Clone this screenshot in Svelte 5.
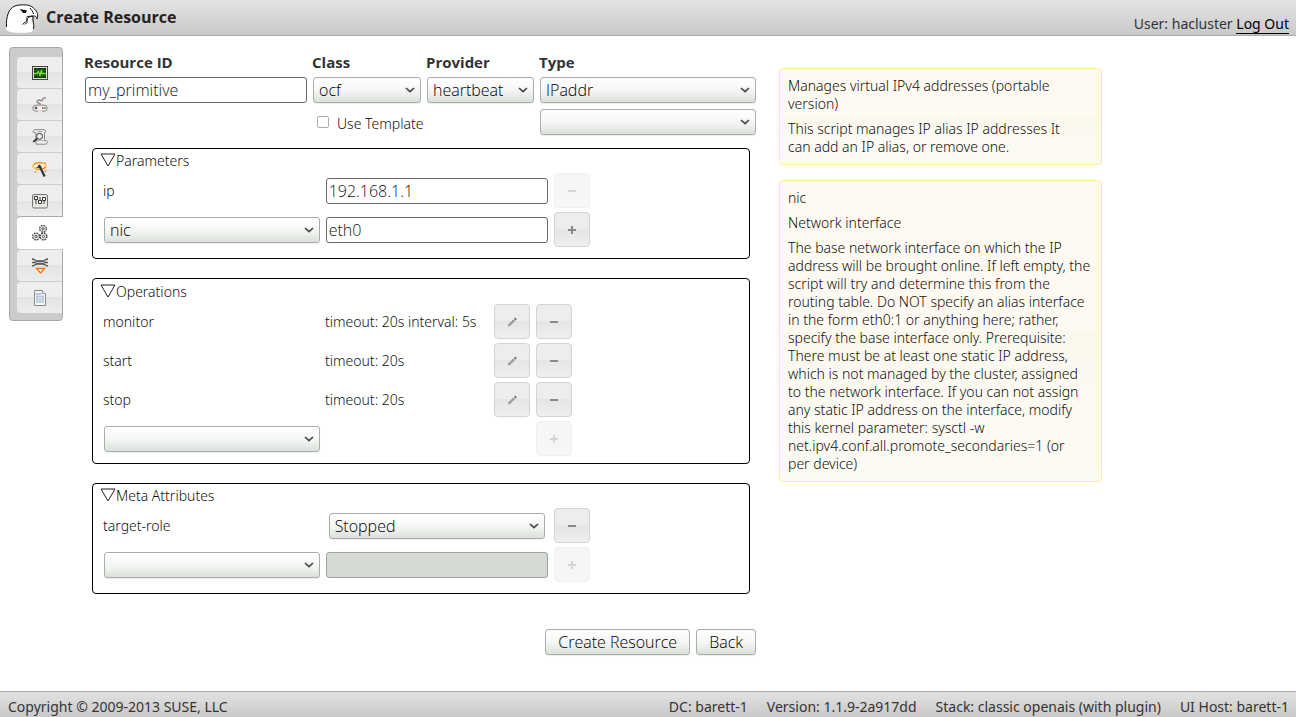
<script>
  let resourceId = $state('my_primitive');
  let useTemplate = $state(false);
  let ip = $state('192.168.1.1');
  let nic = $state('eth0');

  const tabs = ['status', 'simulator', 'history', 'wizard', 'settings', 'resources', 'constraints', 'report'];
  const names = {
    status: 'Cluster Status',
    simulator: 'Simulator',
    history: 'History Explorer',
    wizard: 'Setup Wizard',
    settings: 'Cluster Properties',
    resources: 'Resources',
    constraints: 'Constraints',
    report: 'Report'
  };
  const operations = [
    { name: 'monitor', detail: 'timeout: 20s interval: 5s' },
    { name: 'start', detail: 'timeout: 20s' },
    { name: 'stop', detail: 'timeout: 20s' }
  ];
</script>

{#snippet dropdown(id, value, label)}
  <span class="dropdown">
    <select {id} aria-label={label}><option>{value}</option></select>
    <svg width="10" height="6" viewBox="0 0 10 6" aria-hidden="true"><path d="M1 1 5 4.7 9 1" fill="none" stroke="#444" stroke-width="1.7" /></svg>
  </span>
{/snippet}

{#snippet tool(kind, label, disabled)}
  <button class="tool" type="button" aria-label={label} {disabled}>
    <svg width="12" height="12" viewBox="0 0 12 12" aria-hidden="true">
      {#if kind === 'edit'}
        <path d="M2 10.5 2.6 8.2 7.4 3.4 9 5 4.2 9.8Z" fill="#888" />
        <path d="M3.5 9 8 4.5" stroke="#ccc" stroke-width=".7" />
        <path d="M8 2.8 9.2 1.6 10.8 3.2 9.6 4.4Z" fill="#666" />
      {:else}
        <path d="M2 5h8v2H2z" fill="#888" />
        {#if kind === 'add'}<path d="M5 2h2v8H5z" fill="#888" />{/if}
      {/if}
    </svg>
  </button>
{/snippet}

{#snippet heading(text)}
  <h2>
    <svg width="16" height="14" viewBox="0 0 16 14" aria-hidden="true"><path d="M1 1h14L8 13Z" fill="none" stroke="#222" /></svg>{text}
  </h2>
{/snippet}

{#snippet tabIcon(name)}
  <svg width="16" height="16" viewBox="0 0 16 16" aria-hidden="true">
    {#if name === 'status'}
      <rect x=".5" y="1.5" width="15" height="13" fill="#ddd" stroke="#444" />
      <rect x="2" y="3" width="12" height="10" fill="#123d08" />
      <path d="M5.5 3v10M10.5 3v10M2 5.5h12M2 10.5h12" stroke="#2b6a16" stroke-width=".8" />
      <path d="M2 8.5h3l1.500-2L8 10.500 9.500 5v3.500H14" fill="none" stroke="#7be52e" stroke-width="1.300" />
    {:else if name === 'simulator'}
      <path d="M8 8C9 5 3.500 7 5.500 4S9 5 10 3.500 10 .500 14 1" fill="none" stroke="#777" stroke-width="1.200" />
      <rect x=".8" y="8.200" width="14.400" height="6" rx="3" fill="#f4f4f0" stroke="#888" />
      <path d="M6 14.500h4" stroke="#eee" />
      <path d="M2.500 11h3M4 9.500v3" stroke="#333" />
      <circle cx="10.800" cy="11" r=".9" fill="#b55" /><circle cx="13" cy="11" r=".9" fill="#585" />
    {:else if name === 'history'}
      <path d="M3 .7h9.500c1.500 0 1.500 3 0 3v8h1.800c1.500 0 1 3.500-.8 3.500H4V3.700H2C.5 3.700.7.7 3 .7Z" fill="#f0f0ea" stroke="#888" />
      <path d="M4 11.700h9M5.500 2.500h5" stroke="#aaa" />
      <circle cx="7.500" cy="7.300" r="3" fill="#e7f0f8" stroke="#333" />
      <path d="m5.200 9.600-4 3.200" stroke="#222" stroke-width="1.700" />
    {:else if name === 'wizard'}
      <ellipse cx="7.500" cy="5" rx="6.700" ry="3.300" fill="none" stroke="#ffc640" stroke-width="1.500" />
      <path d="M2 3.500C4.500 1 9 1.500 11 2M4 8c3 .7 8 0 10-2" fill="none" stroke="#f18a20" stroke-width="1.200" />
      <path d="m7 4 5.700 11.500" stroke="#333" stroke-width="2.200" />
      <path d="m4.500 6.500 5-.5M7 4l-.5 2" fill="none" stroke="#333" />
      <path d="M3.500 10v2M2.500 11h2M13.500 9v2M12.500 10h2M13 1v2M12 2h2" stroke="#e98b54" stroke-width=".8" />
    {:else if name === 'settings'}
      <rect x=".5" y="1.500" width="15" height="13.500" rx="1.500" fill="#e7e7e3" stroke="#777" />
      <path d="M4 4v7M8 4v7M12 4v7" stroke="#444" />
      <path d="M2.500 3.500h3v3h-3zM6.500 7.500h3v3h-3zM10.500 4.500h3v3h-3z" fill="#fff" stroke="#333" />
    {:else if name === 'resources'}
      {#each [[11, 3.8], [4, 11.500], [11.500, 11.500]] as [x, y]}
        <circle cx={x} cy={y} r="3.300" fill="#eee" stroke="#444" stroke-width="1.500" stroke-dasharray="1.700 .890" />
        <circle cx={x} cy={y} r="2.500" fill="#e4e4e4" />
        <circle cx={x} cy={y} r="1.100" fill="#fff" stroke="#444" stroke-width=".9" />
      {/each}
    {:else if name === 'constraints'}
      <path d="M0 1c3 0 3 2 5 2h6c2 0 2-2 5-2M0 4.500h16M0 8c3 0 3-2 5-2h6c2 0 2 2 5 2" fill="none" stroke="#555" stroke-width="1.300" />
      <path d="M4 4.500h8" stroke="#ccc" />
      <path d="M4.500 10.500h8l-4 4.500Z" fill="#fff" stroke="#f07818" stroke-width="1.400" />
    {:else}
      <path d="M2.500.5h8l3 3v12h-11Z" fill="#f6f8fb" stroke="#888" />
      <path d="M4 3h6v2h2v7.500H4z" fill="#a9bbd5" />
      <path d="M4 5.500h8M4 8h8M4 10.500h8M6.700 3v9.500M9.300 3v9.500" stroke="#edf2f8" stroke-width=".7" />
      <path d="M10.500.5v3h3" fill="#fff" stroke="#999" />
    {/if}
  </svg>
{/snippet}

<div class="page">
  <header>
    <svg class="logo" width="34" height="30" viewBox="0 0 34 30" aria-hidden="true">
      <path d="M2 28C.5 23 1 18 2.500 13 4 7 8 2.500 15 2c6-.7 11 0 14.500 4 3 3 4 5.500 2.500 10-.5-2-1.500-3.500-4-3-2 .5-1.500 4 0 7.500 1 3 .5 6-1.500 8.500C18 30.500 8 30 2 28Z" fill="#fff" />
      <path d="M1.500 24C1 19 2 14 3 11 5 5 9 2.300 15 2c6-.6 11 0 14.500 4 3 3 4 5.500 2.500 10-.5-2-1.500-3.500-4-3-3 .3-6 1.500-6.500 5l-4 3.500M21.500 14c2.500-.5 4.500-1 6-1M25 5c1.500 2 3 3.500 3.500 6M22 15v4.500l-2 2M28 13v4c0 3 1.500 5 .5 9" fill="none" stroke="#111" stroke-width="1" />
      <path d="m14.500 6 7.500 1.500-1 2.200c-2 .8-3.500.2-4-1.200Z" fill="#111" />
    </svg>
    <h1>Create Resource</h1>
    <p class="user">User: hacluster <a href="#logout">Log Out</a></p>
  </header>

  <div class="body">
    <nav aria-label="Sections">
      {#each tabs as tab}
        <a href="#{tab}" class:active={tab === 'resources'} aria-label={names[tab]}>{@render tabIcon(tab)}</a>
      {/each}
    </nav>

    <main>
      <form onsubmit={(e) => e.preventDefault()}>
        <div class="identity">
          <label for="rid">Resource ID</label>
          <label for="cls">Class</label>
          <label for="provider">Provider</label>
          <label for="type">Type</label>
          <input id="rid" type="text" bind:value={resourceId} />
          {@render dropdown('cls', 'ocf')}
          {@render dropdown('provider', 'heartbeat')}
          {@render dropdown('type', 'IPaddr')}
          <label class="template"><input type="checkbox" bind:checked={useTemplate} />Use Template</label>
          {@render dropdown('template', '', 'Template')}
        </div>

        <section>
          {@render heading('Parameters')}
          <div class="row">
            <label for="ip">ip</label>
            <input id="ip" type="text" bind:value={ip} />
            {@render tool('remove', 'Remove ip', true)}
          </div>
          <div class="row">
            {@render dropdown('param', 'nic', 'Parameter')}
            <input type="text" aria-label="nic" bind:value={nic} />
            {@render tool('add', 'Add parameter', false)}
          </div>
        </section>

        <section class="operations">
          {@render heading('Operations')}
          {#each operations as op}
            <div class="row">
              <span>{op.name}</span>
              <span>{op.detail}</span>
              {@render tool('edit', `Edit ${op.name}`, false)}
              {@render tool('remove', `Remove ${op.name}`, false)}
            </div>
          {/each}
          <div class="row">
            {@render dropdown('operation', '', 'Operation')}
            <span class="blank"></span>
            {@render tool('add', 'Add operation', true)}
          </div>
        </section>

        <section>
          {@render heading('Meta Attributes')}
          <div class="row">
            <label for="role">target-role</label>
            <div class="role">{@render dropdown('role', 'Stopped')}</div>
            {@render tool('remove', 'Remove target-role', false)}
          </div>
          <div class="row">
            {@render dropdown('meta', '', 'Meta attribute')}
            <input type="text" aria-label="Value" disabled />
            {@render tool('add', 'Add attribute', true)}
          </div>
        </section>

        <div class="actions">
          <button type="submit">Create Resource</button>
          <button type="button">Back</button>
        </div>
      </form>

      <aside>
        <div class="help">
          <p>Manages virtual IPv4 addresses (portable<br />version)</p>
          <p>This script manages IP alias IP addresses It<br />can add an IP alias, or remove one.</p>
        </div>
        <div class="help">
          <p>nic</p>
          <p>Network interface</p>
          <p>
            The base network interface on which the IP<br />
            address will be brought online. If left empty, the<br />
            script will try and determine this from the<br />
            routing table. Do NOT specify an alias interface<br />
            in the form eth0:1 or anything here; rather,<br />
            specify the base interface only. Prerequisite:<br />
            There must be at least one static IP address,<br />
            which is not managed by the cluster, assigned<br />
            to the network interface. If you can not assign<br />
            any static IP address on the interface, modify<br />
            this kernel parameter: sysctl -w<br />
            net.ipv4.conf.all.promote_secondaries=1 (or<br />
            per device)
          </p>
        </div>
      </aside>
    </main>
  </div>

  <footer>
    <span class="copyright">Copyright © 2009-2013 SUSE, LLC</span>
    <span>DC: barett-1</span>
    <span>Version: 1.1.9-2a917dd</span>
    <span>Stack: classic openais (with plugin)</span>
    <span>UI Host: barett-1</span>
  </footer>
</div>

<style>
  :global(body) { margin: 0; background: #fff; }
  * { box-sizing: border-box; }
  .page {
    display: flex;
    flex-direction: column;
    min-height: 100vh;
    color: #111;
    font: 300 14px/18px "Noto Sans", "Open Sans", sans-serif;
  }
  h1, h2, p { margin: 0; font-size: 14px; }
  h2 { font-weight: 300; }
  svg { display: block; flex: none; }

  header {
    display: flex;
    align-items: center;
    gap: 7px;
    height: 36px;
    padding: 0 7px 0 5px;
    border-bottom: 1px solid #aaa;
    background: linear-gradient(#e4e4e4, #c9c9c9);
  }
  h1 { color: #222; font: 700 16px/20px "Open Sans", "Noto Sans", sans-serif; padding-bottom: 2px; }
  .user { margin-left: auto; padding-top: 12px; color: #333; font-weight: 400; }
  .user a { color: #000; text-decoration: none; border-bottom: 1px solid #000; }

  .body { flex: 1; display: flex; align-items: flex-start; padding: 11px 0 35px 9px; }
  nav {
    flex: none;
    width: 54px;
    padding: 9px 0 6px 7px;
    border: 1px solid #aaa;
    border-radius: 4px;
    background: #ccc;
  }
  nav a {
    display: flex;
    align-items: center;
    justify-content: center;
    height: 32px;
    border-bottom: 1px solid #ccc;
    border-radius: 4px 0 0 4px;
    background: linear-gradient(#eee 50%, #e4e4e4 50%, #ededed);
  }
  nav a.active { margin: -1px -1px 0 0; height: 34px; padding-right: 1px; border-top: 1px solid #aaa; background: #fff; }

  main {
    flex: 1;
    display: grid;
    grid-template-columns: 672fr 323fr 171fr;
    gap: 23px;
    padding-left: 21px;
  }
  form { min-width: 0; padding-top: 6px; }
  .identity {
    display: grid;
    grid-template-columns: 222fr 108fr 107fr 216fr;
    gap: 6px;
    align-items: center;
    padding-left: 1px;
    margin-bottom: 13px;
  }
  .identity > label:not(.template) {
    height: 18px;
    margin-left: -1px;
    color: #333;
    font: 700 15px/18px "Open Sans", "Noto Sans", sans-serif;
  }
  .identity .template { grid-column: 2 / 4; display: flex; align-items: center; gap: 8px; padding: 4px 0 0 4px; }
  .identity .dropdown:last-child { grid-column: 4; }

  input[type="text"], select, .actions button {
    height: 26px;
    min-width: 0;
    margin: 0;
    border: 1px solid #a7afa8;
    border-radius: 3px;
    color: #111;
    font: 300 16px/20px "Open Sans", "Noto Sans", sans-serif;
  }
  input[type="text"] { width: 100%; padding: 0 2px; border-color: #666b67; background: #fff; }
  input[type="text"]:disabled { border-color: #9ba69d; background: #d5dad4; }
  select, .actions button {
    color: #000;
    background: linear-gradient(#fff, #f5f7f5 50%, #dce1dc);
    box-shadow: 0 1px 1px #eee;
  }
  .dropdown { display: grid; align-items: center; min-width: 0; }
  .dropdown > * { grid-area: 1 / 1; }
  .dropdown svg { justify-self: end; margin-right: 6px; pointer-events: none; }
  select { appearance: none; width: 100%; padding: 0 20px 0 5px; }
  input[type="checkbox"] {
    appearance: none;
    width: 12px;
    height: 12px;
    margin: 0 0 4px;
    border: 1px solid #a7afa8;
    border-radius: 2px;
    background: #fff;
  }
  input[type="checkbox"]:checked { background: #666b67; }

  section {
    margin: 0 6px 19px 8px;
    padding: 3px 11px 11px;
    border: 1px solid #000;
    border-radius: 4px;
  }
  section.operations { padding: 4px 11px 7px; }
  h2 { display: flex; align-items: center; height: 18px; margin: 0 0 3px -4px; }
  h2 svg { margin-bottom: 2px; }
  .row {
    display: grid;
    grid-template-columns: 216fr 223fr 36px 142fr;
    column-gap: 6px;
    align-items: center;
    height: 35px;
    margin-bottom: 4px;
  }
  .row:last-child { margin-bottom: 0; }
  .row > label, .row > span { margin-left: -1px; }
  .row > .dropdown { margin-left: 0; }
  .role { padding: 0 3px; }
  .operations .row { grid-template-columns: 216fr 162fr 36px 36px 160fr; }
  .operations .blank { grid-column: 2 / 4; }
  .tool {
    display: flex;
    align-items: center;
    justify-content: center;
    width: 36px;
    height: 35px;
    padding: 1px 0 0;
    border: 1px solid #d3d3d3;
    border-radius: 4px;
    background: linear-gradient(#ededed 50%, #e5e5e5 50%, #efefef);
  }
  .tool:disabled { opacity: .35; background: #e6e6e6; }

  .actions { display: flex; justify-content: flex-end; gap: 6px; margin-top: 35px; }
  .actions button { padding: 0 12px; }

  aside { min-width: 0; padding-top: 21px; }
  .help {
    margin-bottom: 15px;
    padding: 8px 4px 8px 8px;
    border: 1px solid #fbec9c;
    border-radius: 4px;
    background: linear-gradient(#fefaf2 50%, #fbf9ee 50%, #fcfbf4);
  }
  .help p + p { margin-top: 7px; }

  footer {
    display: flex;
    align-items: center;
    gap: 19px;
    height: 26px;
    padding: 4px 7px 0 8px;
    border-top: 1px solid #aaa;
    background: linear-gradient(#e2e2e2, #c9c9c9);
    color: #333;
    font-weight: 400;
  }
  .copyright { margin-right: auto; }
</style>
